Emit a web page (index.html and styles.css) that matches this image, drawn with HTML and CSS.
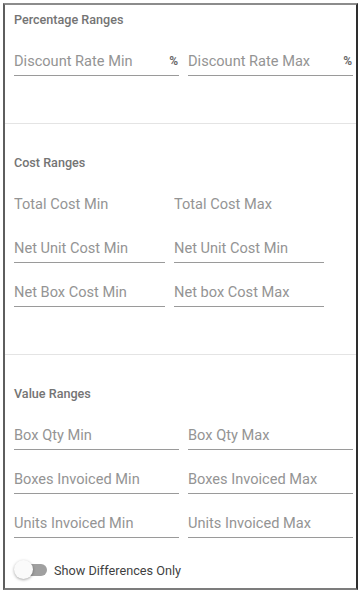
FILE: index.html
```html
<!DOCTYPE html>
<html lang="en">
<head>
  <meta charset="UTF-8">
  <title>Range Filters</title>
  <link rel="stylesheet" href="styles.css">
</head>
<body>

<div class="panel">
  <section class="group group-first">
    <h3 class="group-title">Percentage Ranges</h3>
    <div class="fields">
      <div class="field"><input type="text" placeholder="Discount Rate Min"><span class="suffix">%</span></div>
      <div class="field"><input type="text" placeholder="Discount Rate Max"><span class="suffix">%</span></div>
    </div>
  </section>

  <section class="group">
    <h3 class="group-title">Cost Ranges</h3>
    <div class="fields fields-narrow">
      <div class="field field-plain"><input type="text" placeholder="Total Cost Min"></div>
      <div class="field field-plain"><input type="text" placeholder="Total Cost Max"></div>
      <div class="field"><input type="text" placeholder="Net Unit Cost Min"></div>
      <div class="field"><input type="text" placeholder="Net Unit Cost Min"></div>
      <div class="field"><input type="text" placeholder="Net Box Cost Min"></div>
      <div class="field"><input type="text" placeholder="Net box Cost Max"></div>
    </div>
  </section>

  <section class="group group-last">
    <h3 class="group-title">Value Ranges</h3>
    <div class="fields">
      <div class="field"><input type="text" placeholder="Box Qty Min"></div>
      <div class="field"><input type="text" placeholder="Box Qty Max"></div>
      <div class="field"><input type="text" placeholder="Boxes Invoiced Min"></div>
      <div class="field"><input type="text" placeholder="Boxes Invoiced Max"></div>
      <div class="field"><input type="text" placeholder="Units Invoiced Min"></div>
      <div class="field"><input type="text" placeholder="Units Invoiced Max"></div>
    </div>

    <label class="toggle">
      <span class="toggle-track"><span class="toggle-thumb"></span></span>
      <span class="toggle-label">Show Differences Only</span>
    </label>
  </section>
</div>

</body>
</html>
```

FILE: styles.css
```css
body {
  margin: 0;
  padding: 3px 0 0 3px;
  background: #fff;
  font-family: Roboto, "Liberation Sans", sans-serif;
}
.panel {
  width: 351px;
  border-top: 2px solid #8c8c8c;
  border-left: 2px solid #5e5e5e;
  border-right: 2px solid #2e2e2e;
  border-bottom: 2px solid #7c7c7c;
  background: #fff;
}
.group {
  padding: 31px 3px 47px 9px;
  border-top: 1px solid #e4e4e4;
}
.group-first {
  padding-top: 7px;
  border-top: none;
}
.group-last {
  padding-bottom: 8px;
}
.group-title {
  margin: 0 0 23px;
  font-size: 12.6px;
  line-height: 16px;
  font-weight: 500;
  color: #747474;
}
.fields {
  display: grid;
  grid-template-columns: 165px 165px;
  column-gap: 9px;
  row-gap: 19px;
}
.fields-narrow {
  grid-template-columns: 151px 150px;
}
.field {
  display: flex;
  align-items: center;
  border-bottom: 1px solid #9a9a9a;
  padding-bottom: 4px;
}
.field-plain {
  border-bottom-color: transparent;
}
.field input {
  flex: 1;
  min-width: 0;
  height: 20px;
  padding: 0;
  margin: 0;
  border: none;
  outline: none;
  background: transparent;
  font-family: inherit;
  font-size: 14.6px;
}
.field input::placeholder {
  color: #949494;
}
.suffix {
  font-size: 12px;
  font-weight: 700;
  color: #6a6a6a;
  margin-left: 4px;
  margin-right: 1px;
}
.toggle {
  display: flex;
  align-items: center;
  margin-top: 22px;
  height: 20px;
  cursor: pointer;
}
.toggle-track {
  position: relative;
  width: 32px;
  height: 12px;
  border-radius: 6px;
  background: #a0a0a0;
  margin-left: 1px;
}
.toggle-thumb {
  position: absolute;
  left: -1px;
  top: -4px;
  width: 19px;
  height: 19px;
  border-radius: 50%;
  background: #fafafa;
  box-shadow: 0 1px 3px rgba(0,0,0,0.35);
}
.toggle-label {
  margin-left: 7px;
  font-size: 12.7px;
  color: #3f3f3f;
}
```
